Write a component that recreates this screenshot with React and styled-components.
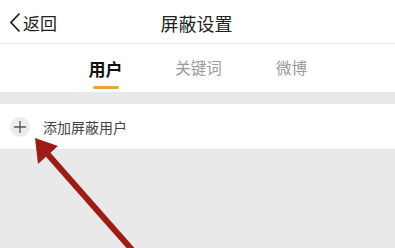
import React from "react";
import styled, { createGlobalStyle } from "styled-components";

const GlobalStyle = createGlobalStyle`
  html, body {
    margin: 0;
    padding: 0;
    background: #e9e9e9;
    font-family: "Noto Sans CJK SC", "Noto Sans", sans-serif;
  }
`;

const tabs = [
  { label: "用户", active: true },
  { label: "关键词" },
  { label: "微博" },
];

const App = () => {
  return (
    <Page>
      <GlobalStyle />
      <Header>
        <BackButton>
          <svg width="12" height="21" viewBox="0 0 12 21">
            <path d="M10.5 1.5 L2 10.5 L10.5 19.5" fill="none" stroke="#222" strokeWidth="1.8" />
          </svg>
          <span>返回</span>
        </BackButton>
        <Title>屏蔽设置</Title>
      </Header>
      <TabBar>
        {tabs.map((t) => (
          <Tab key={t.label} $active={t.active}>
            {t.label}
          </Tab>
        ))}
      </TabBar>
      <Gap />
      <AddRow>
        <PlusCircle>
          <svg width="12" height="12" viewBox="0 0 12 12">
            <path d="M6 0 V12 M0 6 H12" stroke="#555" strokeWidth="1.3" />
          </svg>
        </PlusCircle>
        <AddText>添加屏蔽用户</AddText>
      </AddRow>
      <Arrow width="395" height="248" viewBox="0 0 395 248">
        <line x1="44" y1="150" x2="134" y2="252" stroke="#9e1c15" strokeWidth="6" />
        <polygon points="35,138 58,146 38,164" fill="#9e1c15" />
      </Arrow>
    </Page>
  );
};

export default App;

const Page = styled.div`
  position: relative;
  width: 395px;
  height: 248px;
  overflow: hidden;
  background: #e9e9e9;
`;

const Header = styled.header`
  position: relative;
  display: flex;
  align-items: center;
  justify-content: center;
  height: 44px;
  background: #fff;
  border-bottom: 1px solid #e6e6e6;
  box-sizing: border-box;
`;

const BackButton = styled.div`
  position: absolute;
  left: 9px;
  top: 0;
  bottom: 0;
  display: flex;
  align-items: center;
  gap: 2px;
  font-size: 17px;
  color: #222;
  padding-top: 1px;
`;

const Title = styled.h1`
  margin: 0;
  font-size: 18px;
  font-weight: 400;
  color: #222;
  padding-top: 3px;
  padding-right: 2px;
`;

const TabBar = styled.nav`
  display: flex;
  justify-content: center;
  height: 48px;
  background: #fff;
  padding-left: 2px;
`;

const Tab = styled.div`
  position: relative;
  width: 93px;
  display: flex;
  justify-content: center;
  padding-top: 12px;
  box-sizing: border-box;
  font-size: ${(p) => (p.$active ? "17px" : "15.5px")};
  font-weight: ${(p) => (p.$active ? 700 : 400)};
  color: ${(p) => (p.$active ? "#111" : "#9a9a9a")};

  &::after {
    content: "";
    display: ${(p) => (p.$active ? "block" : "none")};
    position: absolute;
    left: 50%;
    top: 42px;
    width: 26px;
    height: 3px;
    margin-left: -13px;
    border-radius: 2px;
    background: #e8a537;
  }
`;

const Gap = styled.div`
  height: 12px;
`;

const AddRow = styled.div`
  display: flex;
  align-items: center;
  height: 45px;
  background: #fff;
  padding-left: 10px;
  gap: 13px;
`;

const PlusCircle = styled.div`
  width: 20px;
  height: 20px;
  border-radius: 50%;
  background: #ececec;
  display: flex;
  align-items: center;
  justify-content: center;
`;

const AddText = styled.span`
  font-size: 14px;
  color: #444;
`;

const Arrow = styled.svg`
  position: absolute;
  left: 0;
  top: 0;
  pointer-events: none;
`;
